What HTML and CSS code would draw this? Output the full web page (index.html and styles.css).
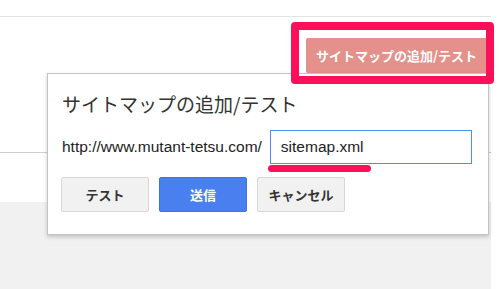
FILE: index.html
```html
<!DOCTYPE html>
<html lang="ja">
<head>
    <meta charset="UTF-8">
    <title>サイトマップの追加/テスト</title>
    <link rel="stylesheet" href="styles.css">
</head>
<body>
    <div class="page">
        <!-- ヘッダー -->
        <div class="topbar"></div>

        <!-- ツールバー -->
        <div class="toolbar">
            <button type="button" class="btn-add">サイトマップの追加/テスト</button>
        </div>

        <div class="panel"></div>
        <div class="content"></div>
    </div>

    <!-- 追加ダイアログ -->
    <div class="dialog">
        <h2 class="dialog-title">サイトマップの追加/テスト</h2>
        <div class="url-row">
            <span class="url-base">http://www.mutant-tetsu.com/</span>
            <div class="field">
                <input type="text" class="url-input" value="sitemap.xml">
                <span class="underline"></span>
            </div>
        </div>
        <div class="actions">
            <button type="button" class="btn">テスト</button>
            <button type="button" class="btn btn-primary">送信</button>
            <button type="button" class="btn">キャンセル</button>
        </div>
    </div>

    <!-- 強調枠 -->
    <div class="highlight"></div>
</body>
</html>
```

FILE: styles.css
```css
body {
    margin: 0;
    font-family: "Liberation Sans", "Noto Sans CJK JP", sans-serif;
    background: #fff;
    width: 500px;
    height: 289px;
    overflow: hidden;
    position: relative;
}
.page {
    width: 491px;
    height: 289px;
    display: flex;
    flex-direction: column;
}
.topbar {
    height: 16px;
    border-bottom: 1px solid #e3e3e3;
}
.toolbar {
    height: 136px;
    border-bottom: 1px solid #cfcfcf;
    display: flex;
    justify-content: flex-end;
    align-items: flex-start;
    padding-top: 21px;
    box-sizing: border-box;
}
.btn-add {
    width: 184px;
    height: 35px;
    margin-right: 1px;
    background-color: #e3918a;
    color: #fff;
    border: none;
    border-radius: 2px;
    font-family: "Noto Sans CJK JP", sans-serif;
    font-weight: bold;
    font-size: 13px;
    padding: 0 0 0 10px;
    text-align: left;
}
.panel {
    height: 49px;
}
.content {
    flex: 1;
    background: #f1f1f1;
}
.dialog {
    position: absolute;
    left: 47px;
    top: 73px;
    width: 442px;
    height: 162px;
    box-sizing: border-box;
    background: #fff;
    border: 1px solid #c4c4c4;
    box-shadow: 0 2px 4px rgba(0, 0, 0, 0.2);
    padding: 18px 13px 0 13px;
}
.dialog-title {
    margin: 0 0 14px 1px;
    font-family: "Noto Sans CJK JP", sans-serif;
    font-size: 19px;
    line-height: 24px;
    font-weight: normal;
    color: #333;
}
.url-row {
    display: flex;
    align-items: center;
    height: 34px;
}
.url-base {
    font-size: 15.5px;
    color: #222;
    margin-left: 1px;
    margin-right: 8px;
}
.field {
    position: relative;
}
.url-input {
    width: 202px;
    height: 34px;
    box-sizing: border-box;
    border: 1px solid #4d8cfc;
    padding: 0 0 0 10px;
    font-family: "Liberation Sans", sans-serif;
    font-size: 15.5px;
    color: #222;
    outline: none;
    display: block;
}
.underline {
    position: absolute;
    left: -2px;
    top: 35px;
    width: 103px;
    height: 7px;
    border-radius: 4px;
    background: #fd0f5a;
}
.actions {
    display: flex;
    gap: 10px;
    margin-top: 13px;
}
.btn {
    width: 88px;
    height: 35px;
    background-color: #f1f1f1;
    border: 1px solid #d8d8d8;
    border-radius: 2px;
    font-family: "Noto Sans CJK JP", sans-serif;
    font-weight: bold;
    font-size: 13px;
    color: #333;
    padding: 0;
}
.btn-primary {
    background-color: #4a7ff0;
    border-color: #3d72e2;
    color: #fff;
}
.highlight {
    position: absolute;
    left: 291px;
    top: 22px;
    width: 203px;
    height: 62px;
    box-sizing: border-box;
    border: 8px solid #fd0f5a;
    border-radius: 4px;
}
```
